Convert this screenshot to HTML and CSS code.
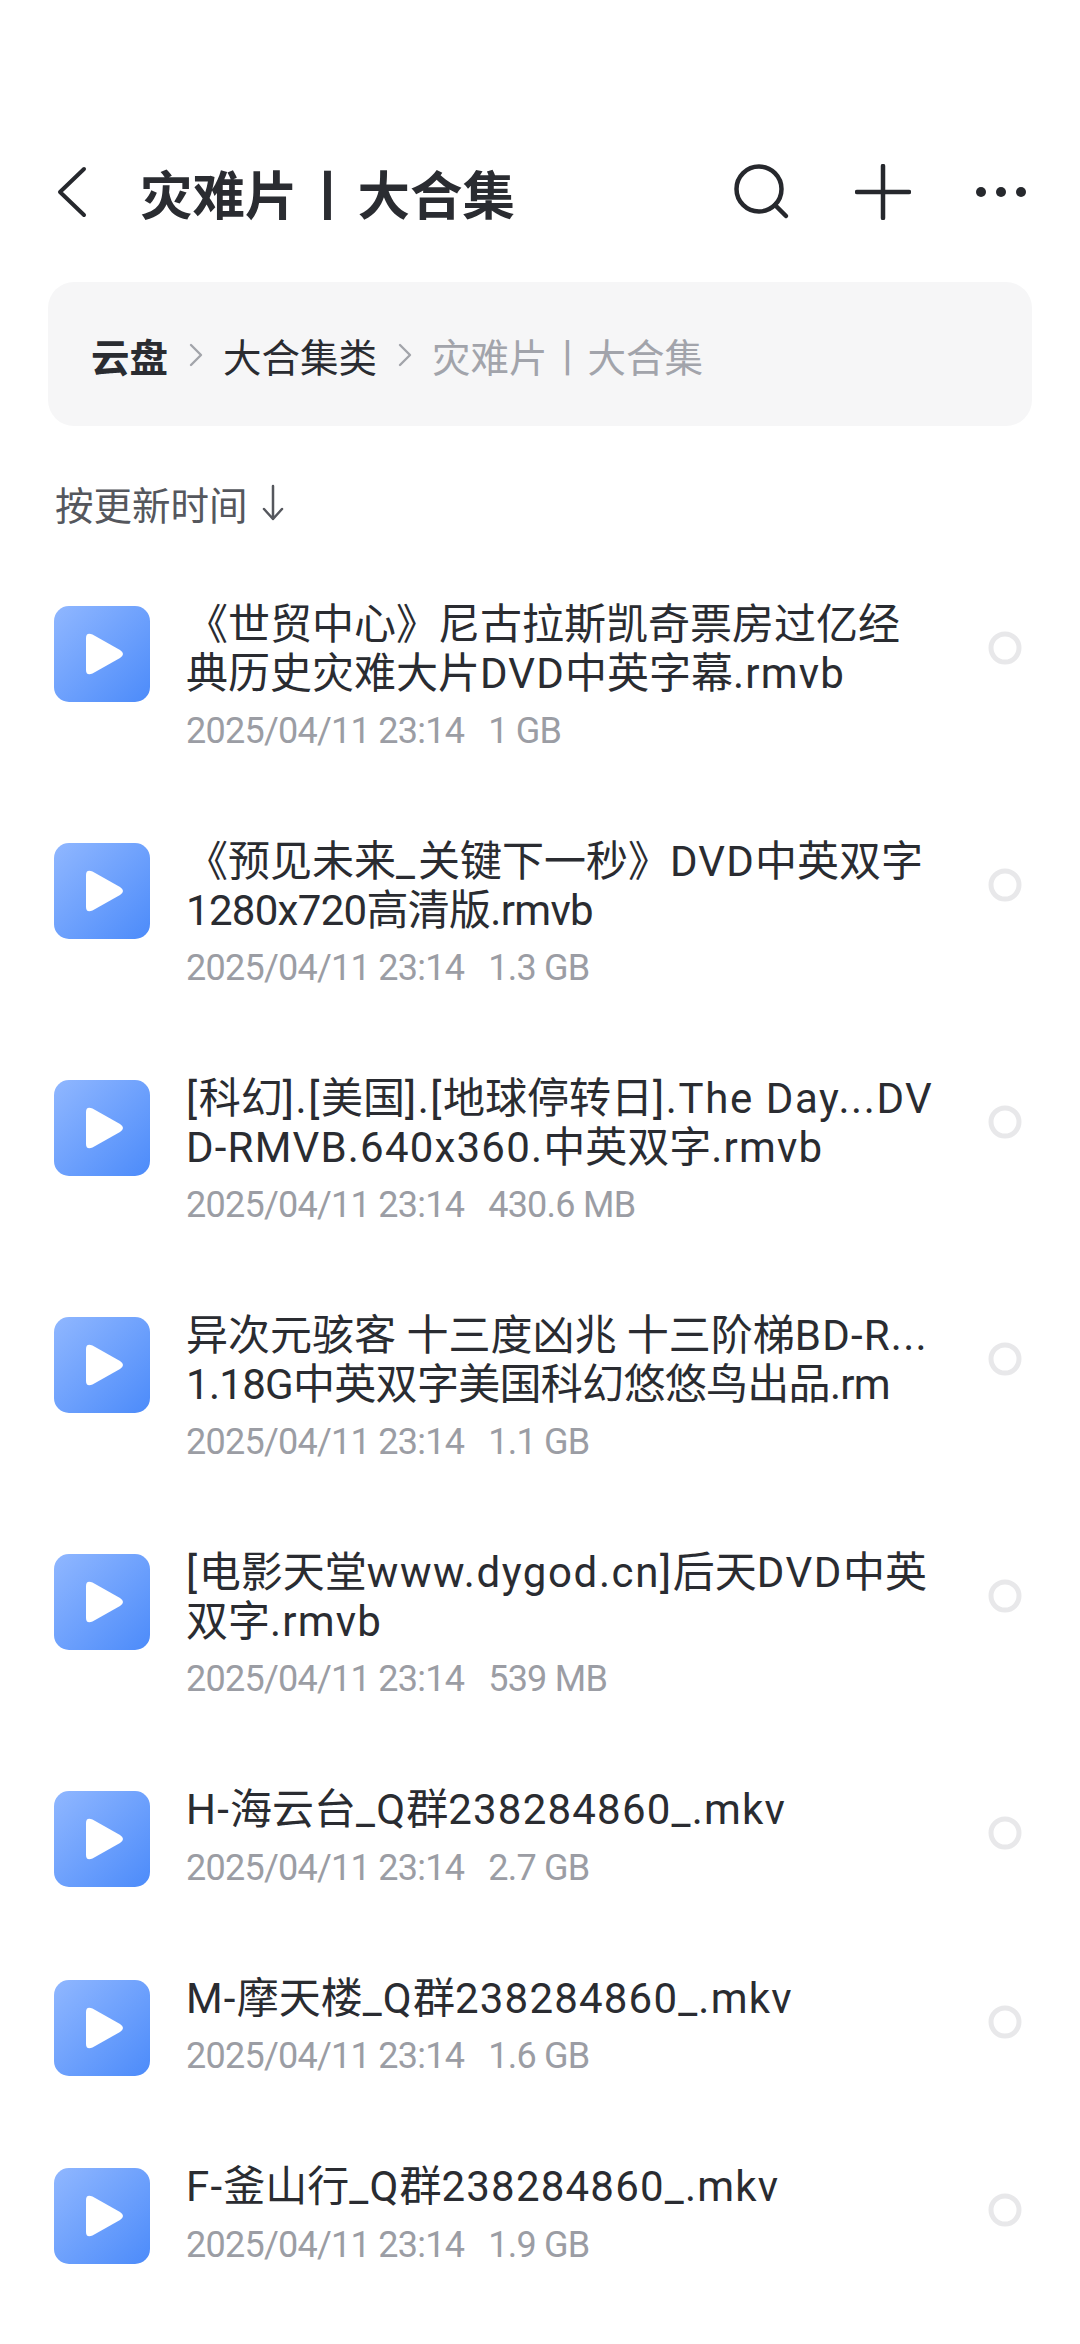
FILE: index.html
```html
<!DOCTYPE html>
<html lang="zh-CN">
<head>
<meta charset="utf-8">
<title>灾难片丨大合集</title>
<link rel="stylesheet" href="styles.css">
</head>
<body>
<svg class="defs" width="0" height="0" aria-hidden="true">
  <defs>
    <linearGradient id="tile" x1="0" y1="0" x2="1" y2="1">
      <stop offset="0" stop-color="#90b7ff"/>
      <stop offset="1" stop-color="#4c8bfa"/>
    </linearGradient>
    <symbol id="video" viewBox="0 0 96 96">
      <rect width="96" height="96" rx="15" fill="url(#tile)"/>
      <path d="M38.500 28.500 L66 44 Q72 48 66 52 L38.500 67.500 Q32 70 32 64 V32 Q32 26 38.500 28.500 Z" fill="#fff"/>
    </symbol>
    <symbol id="radio" viewBox="0 0 34 34">
      <circle cx="17" cy="17" r="14" fill="none" stroke="#e8e8ea" stroke-width="5"/>
    </symbol>
    <symbol id="crumb-chevron" viewBox="0 0 14 24">
      <path d="M2 2 L12 12 L2 22" fill="none" stroke="#a2a4aa" stroke-width="2.400" stroke-linecap="round" stroke-linejoin="round"/>
    </symbol>
  </defs>
</svg>
<main class="page">
  <header class="topbar">
    <svg class="back" viewBox="0 0 32 52" aria-hidden="true"><path d="M28 3 L4 26 L28 49" fill="none" stroke="#26282d" stroke-width="4" stroke-linecap="round" stroke-linejoin="round"/></svg>
    <h1 class="title">灾难片<span class="title-bar">丨</span>大合集</h1>
    <div class="actions">
      <svg class="act act-search" viewBox="0 0 56 56" aria-hidden="true"><circle cx="25" cy="25" r="22.500" fill="none" stroke="#26282d" stroke-width="4.500"/><path d="M41 41 L52 52" stroke="#26282d" stroke-width="4.500" stroke-linecap="round"/></svg>
      <svg class="act act-plus" viewBox="0 0 56 56" aria-hidden="true"><path d="M28 2 V54 M2 28 H54" stroke="#26282d" stroke-width="4.500" stroke-linecap="round"/></svg>
      <svg class="act act-more" viewBox="0 0 52 12" aria-hidden="true"><circle cx="6" cy="6" r="5" fill="#26282d"/><circle cx="26" cy="6" r="5" fill="#26282d"/><circle cx="46" cy="6" r="5" fill="#26282d"/></svg>
    </div>
  </header>

  <nav class="crumbs">
    <span class="crumb crumb-root">云盘</span>
    <svg class="crumb-sep"><use href="#crumb-chevron"/></svg>
    <span class="crumb">大合集类</span>
    <svg class="crumb-sep"><use href="#crumb-chevron"/></svg>
    <span class="crumb crumb-current">灾难片<span class="crumb-bar">丨</span>大合集</span>
  </nav>

  <div class="sort">
    <span>按更新时间</span>
    <svg class="sort-arrow" viewBox="0 0 24 38" aria-hidden="true"><path d="M12 2 V35 M3 25 L12 35 L21 25" fill="none" stroke="#55575d" stroke-width="2.500" stroke-linecap="round" stroke-linejoin="round"/></svg>
  </div>

  <ul class="files">
    <li class="file">
      <svg class="file-icon"><use href="#video"/></svg>
      <div class="file-body">
        <p class="file-name">《世贸中心》尼古拉斯凯奇票房过亿经<br>典历史灾难大片<span class="lat">DVD</span>中英字幕<span class="lat">.rmvb</span></p>
        <p class="file-meta"><span>2025/04/11 23:14</span><span>1 GB</span></p>
      </div>
      <svg class="file-radio"><use href="#radio"/></svg>
    </li>
    <li class="file">
      <svg class="file-icon"><use href="#video"/></svg>
      <div class="file-body">
        <p class="file-name">《预见未来<span class="lat-wide">_</span>关键下一秒》<span class="lat">DVD</span>中英双字<br><span class="tight">1280x720高清版.rmvb</span></p>
        <p class="file-meta"><span>2025/04/11 23:14</span><span>1.3 GB</span></p>
      </div>
      <svg class="file-radio"><use href="#radio"/></svg>
    </li>
    <li class="file">
      <svg class="file-icon"><use href="#video"/></svg>
      <div class="file-body">
        <p class="file-name"><span class="lat-mid">[</span>科幻<span class="lat-mid">].[</span>美国<span class="lat-mid">].[</span>地球停转日<span class="lat-mid">].The Day...DV</span><br><span class="lat">D-RMVB.640x360.</span>中英双字<span class="lat">.rmvb</span></p>
        <p class="file-meta"><span>2025/04/11 23:14</span><span>430.6 MB</span></p>
      </div>
      <svg class="file-radio"><use href="#radio"/></svg>
    </li>
    <li class="file">
      <svg class="file-icon"><use href="#video"/></svg>
      <div class="file-body">
        <p class="file-name">异次元骇客 十三度凶兆 十三阶梯<span class="lat">BD-R...</span><br><span class="tight">1.18G中英双字美国科幻悠悠鸟出品.rm</span></p>
        <p class="file-meta"><span>2025/04/11 23:14</span><span>1.1 GB</span></p>
      </div>
      <svg class="file-radio"><use href="#radio"/></svg>
    </li>
    <li class="file">
      <svg class="file-icon"><use href="#video"/></svg>
      <div class="file-body">
        <p class="file-name"><span class="lat-mid">[</span>电影天堂<span class="lat-mid">www.dygod.cn]</span>后天<span class="lat-mid">DVD</span>中英<br>双字<span class="lat">.rmvb</span></p>
        <p class="file-meta"><span>2025/04/11 23:14</span><span>539 MB</span></p>
      </div>
      <svg class="file-radio"><use href="#radio"/></svg>
    </li>
    <li class="file">
      <svg class="file-icon"><use href="#video"/></svg>
      <div class="file-body">
        <p class="file-name"><span class="lat">H-</span>海云台<span class="lat">_Q</span>群<span class="lat">238284860_.mkv</span></p>
        <p class="file-meta"><span>2025/04/11 23:14</span><span>2.7 GB</span></p>
      </div>
      <svg class="file-radio"><use href="#radio"/></svg>
    </li>
    <li class="file">
      <svg class="file-icon"><use href="#video"/></svg>
      <div class="file-body">
        <p class="file-name"><span class="lat">M-</span>摩天楼<span class="lat">_Q</span>群<span class="lat">238284860_.mkv</span></p>
        <p class="file-meta"><span>2025/04/11 23:14</span><span>1.6 GB</span></p>
      </div>
      <svg class="file-radio"><use href="#radio"/></svg>
    </li>
    <li class="file">
      <svg class="file-icon"><use href="#video"/></svg>
      <div class="file-body">
        <p class="file-name"><span class="lat">F-</span>釜山行<span class="lat">_Q</span>群<span class="lat">238284860_.mkv</span></p>
        <p class="file-meta"><span>2025/04/11 23:14</span><span>1.9 GB</span></p>
      </div>
      <svg class="file-radio"><use href="#radio"/></svg>
    </li>
  </ul>
</main>
</body>
</html>
```
FILE: styles.css
```css
* { box-sizing: border-box; }
html, body { margin: 0; padding: 0; background: #fff; }
body {
  width: 1080px;
  height: 2344px;
  overflow: hidden;
  font-family: Roboto, "Noto Sans CJK SC", sans-serif;
  color: #2a2c31;
}
.defs { position: absolute; }
.page { display: flex; flex-direction: column; padding-top: 162px; }

.topbar { display: flex; align-items: center; height: 60px; padding-left: 56px; }
.back { width: 32px; height: 52px; flex: none; }
.title {
  margin: 0 0 0 52px;
  font-size: 52.500px;
  line-height: 60px;
  font-weight: 700;
  font-family: "Noto Sans CJK SC", sans-serif;
  white-space: nowrap;
}
.title-bar { display: inline-block; width: 60px; text-align: center; }
.actions { display: flex; align-items: center; margin-left: auto; padding-right: 53px; }
.act { flex: none; display: block; }
.act-search { width: 56px; height: 56px; }
.act-plus { width: 56px; height: 56px; margin-left: 65px; }
.act-more { width: 52px; height: 12px; margin-left: 64px; }

.crumbs {
  display: flex;
  align-items: center;
  height: 144px;
  margin: 60px 48px 0;
  padding: 1px 0 0 43px;
  background: #f6f6f7;
  border-radius: 26px;
}
.crumb {
  font-size: 38.500px;
  line-height: 50px;
  font-family: "Noto Sans CJK SC", sans-serif;
  white-space: nowrap;
}
.crumb-root { font-weight: 700; }
.crumb-current { color: #a2a4ab; }
.crumb-bar { display: inline-block; width: 40px; text-align: center; }
.crumb-sep { width: 14px; height: 24px; margin: 0 20px 0 21px; flex: none; }

.sort {
  display: flex;
  align-items: center;
  gap: 13px;
  margin: 52px 0 0 55px;
  height: 50px;
  font-size: 38.500px;
  line-height: 50px;
  color: #55575d;
  font-family: "Noto Sans CJK SC", sans-serif;
}
.sort-arrow { width: 24px; height: 38px; flex: none; }

.files { list-style: none; margin: 0; padding: 78px 0 0 54px; }
.file { display: flex; align-items: flex-start; padding-bottom: 87px; }
.file-icon { width: 96px; height: 96px; flex: none; }
.file-body { margin: -5px 0 0 36px; width: 770px; flex: none; }
.file-name {
  margin: 0;
  font-size: 42px;
  line-height: 48.500px;
  white-space: nowrap;
}
.lat { letter-spacing: 1.200px; }
.lat-mid { letter-spacing: 1.600px; }
.lat-wide { letter-spacing: 3px; }
.tight { letter-spacing: -0.700px; }
.file-meta {
  display: flex;
  gap: 24px;
  margin: 8px 0 0;
  font-size: 36px;
  letter-spacing: -0.750px;
  line-height: 50px;
  color: #9b9da4;
  white-space: nowrap;
}
.file-radio { width: 34px; height: 34px; flex: none; margin: 25px 0 0 32px; }
```
